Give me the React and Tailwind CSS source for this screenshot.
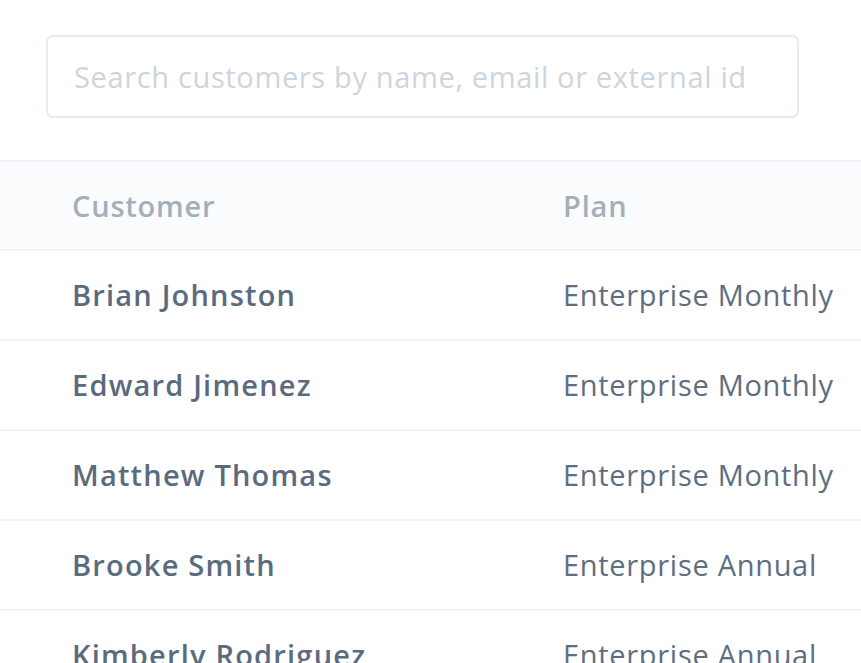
import React from "react";

const rows = [
  ["Brian Johnston", "Enterprise Monthly"],
  ["Edward Jimenez", "Enterprise Monthly"],
  ["Matthew Thomas", "Enterprise Monthly"],
  ["Brooke Smith", "Enterprise Annual"],
  ["Kimberly Rodriguez", "Enterprise Annual"],
];

export default function App() {
  return (
    <div className="w-[861px] h-[663px] overflow-hidden bg-white" style={{ fontFamily: "'Open Sans', Lato, sans-serif" }}>
      <div className="pt-[35px] pl-[46px]">
        <div className="w-[753px] h-[83px] border-2 border-[#e6ebf1] rounded-[7px] flex items-center pl-[26px]">
          <span className="text-[29px] tracking-[0.65px] text-[#cdd5de] whitespace-nowrap">Search customers by name, email or external id</span>
        </div>
      </div>
      <div className="mt-[42px] w-[900px]">
        <div className="h-[91px] flex items-center bg-[#fafbfd] border-y-2 border-[#eef1f5]">
          <div className="w-[563px] pl-[72px] text-[29px] tracking-[0.8px] font-semibold text-[#a5afbb]">Customer</div>
          <div className="text-[29px] tracking-[0.8px] font-semibold text-[#a5afbb]">Plan</div>
        </div>
        {rows.map(([n, p]) => (
          <div key={n} className="h-[90px] flex items-center border-b-2 border-[#f2f4f7]">
            <div className="w-[563px] pl-[72px] text-[29px] tracking-[1.2px] font-semibold text-[#5b6b7e] whitespace-nowrap">{n}</div>
            <div className="text-[29px] tracking-[0.7px] text-[#5e6e81] whitespace-nowrap">{p}</div>
          </div>
        ))}
      </div>
    </div>
  );
}
